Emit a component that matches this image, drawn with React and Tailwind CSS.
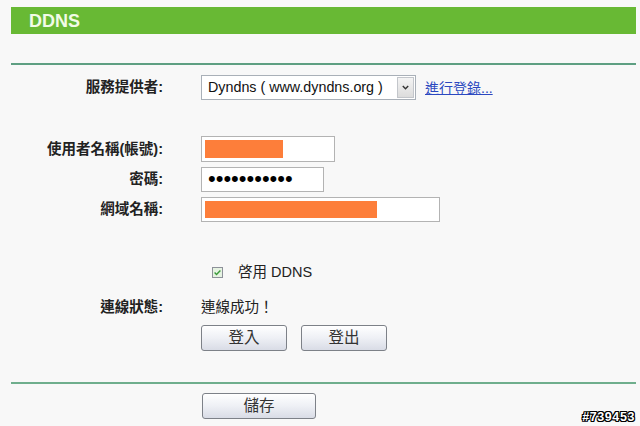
import React from "react";

const FONT = "font-['Liberation_Sans','Noto_Sans_CJK_TC',sans-serif]";

function Label({ children }) {
  return (
    <div className="text-right text-[14.5px] font-bold text-[#222] leading-none whitespace-nowrap">
      {children}
    </div>
  );
}

function Btn({ children, w }) {
  return (
    <button
      className={`${w} h-[26px] rounded-[3px] border border-[#7d8188] bg-gradient-to-b from-[#ffffff] via-[#eef0f5] to-[#d9dce6] text-[15.5px] text-[#333] leading-none flex items-center justify-center shadow-[inset_0_1px_0_#fff]`}
    >
      {children}
    </button>
  );
}

export default function App() {
  return (
    <div className={`relative w-[640px] h-[426px] bg-[#f8f8f8] overflow-hidden ${FONT}`}>
      <div className="pt-[7px] pl-[11px] pr-[4px]">
        <div className="h-[27px] bg-[#68b934] flex items-center pl-[18px] text-[18px] font-bold text-[#f1fbe6] leading-none">
          DDNS
        </div>
        <div className="mt-[29px] h-[2px] bg-[#5e9f82]" />

        <div className="grid grid-cols-[152px_1fr] gap-x-[38px] items-center">
          {/* provider */}
          <div className="mt-[10px]"><Label>服務提供者:</Label></div>
          <div className="mt-[10px] flex items-center">
            <div className="w-[215px] h-[25px] border border-[#a9b0b8] bg-white flex items-center justify-between pl-[6px] pr-[1px]">
              <span className="text-[14.3px] text-[#111] leading-none">Dyndns ( www.dyndns.org )</span>
              <span className="w-[17px] h-[21px] border border-[#c3c6cb] bg-gradient-to-b from-[#f4f4f4] to-[#dcdcdc] flex items-center justify-center">
                <svg width="7" height="5" viewBox="0 0 7 5">
                  <path d="M0.8 1 L3.5 3.8 L6.2 1" fill="none" stroke="#333" strokeWidth="1.4" />
                </svg>
              </span>
            </div>
            <a className="ml-[9px] text-[14px] text-[#2b48c0] underline leading-none cursor-pointer">進行登錄...</a>
          </div>

          {/* username */}
          <div className="mt-[36px]"><Label>使用者名稱(帳號):</Label></div>
          <div className="mt-[36px]">
            <div className="w-[134px] h-[26px] border border-[#b3b3b3] bg-white p-[3px]">
              <div className="w-[78px] h-full bg-[#fd7e3a]" />
            </div>
          </div>

          {/* password */}
          <div className="mt-[5px]"><Label>密碼:</Label></div>
          <div className="mt-[5px]">
            <div className="w-[123px] h-[25px] border border-[#b3b3b3] bg-white pl-[6px] flex items-center overflow-hidden">
              <span className="text-[22px] leading-none text-black font-['Liberation_Sans',sans-serif] translate-y-[-1px]">•••••••••••</span>
            </div>
          </div>

          {/* domain */}
          <div className="mt-[5px]"><Label>網域名稱:</Label></div>
          <div className="mt-[5px]">
            <div className="w-[239px] h-[25px] border border-[#b3b3b3] bg-white p-[3px]">
              <div className="w-[172px] h-full bg-[#fd7e3a]" />
            </div>
          </div>

          {/* enable */}
          <div className="mt-[40px] h-[20px]" />
          <div className="mt-[40px] h-[20px] flex items-center pl-[11px]">
            <svg width="11" height="11" viewBox="0 0 11 11">
              <rect x="0.5" y="0.5" width="10" height="10" fill="#e6f3e2" stroke="#8d9199" />
              <path d="M2.6 5.6 L4.5 7.5 L8.4 3.4" fill="none" stroke="#3a9a3a" strokeWidth="1.4" />
            </svg>
            <span className="ml-[15px] text-[14.5px] text-[#222] leading-none">啓用 DDNS</span>
          </div>

          {/* status */}
          <div className="mt-[15px] h-[20px] flex items-center justify-end"><Label>連線狀態:</Label></div>
          <div className="mt-[15px] h-[20px] flex items-center text-[14.5px] text-[#222] leading-none">連線成功！</div>

          {/* login buttons */}
          <div className="mt-[8px]" />
          <div className="mt-[8px] flex items-center gap-[14px]">
            <Btn w="w-[86px]">登入</Btn>
            <Btn w="w-[86px]">登出</Btn>
          </div>
        </div>

        <div className="mt-[31px] h-[2px] bg-[#6fae8d]" />

        <div className="grid grid-cols-[152px_1fr] gap-x-[39px] mt-[9px]">
          <div />
          <div>
            <Btn w="w-[114px]">儲存</Btn>
          </div>
        </div>
      </div>

      <div className="absolute right-[5px] bottom-[3px] text-[12.5px] font-bold text-white leading-none tracking-[0.6px] [text-shadow:1px_0_#000,-1px_0_#000,0_1px_#000,0_-1px_#000,1px_1px_#000,-1px_-1px_#000,1px_-1px_#000,-1px_1px_#000]">
        #739453
      </div>
    </div>
  );
}
